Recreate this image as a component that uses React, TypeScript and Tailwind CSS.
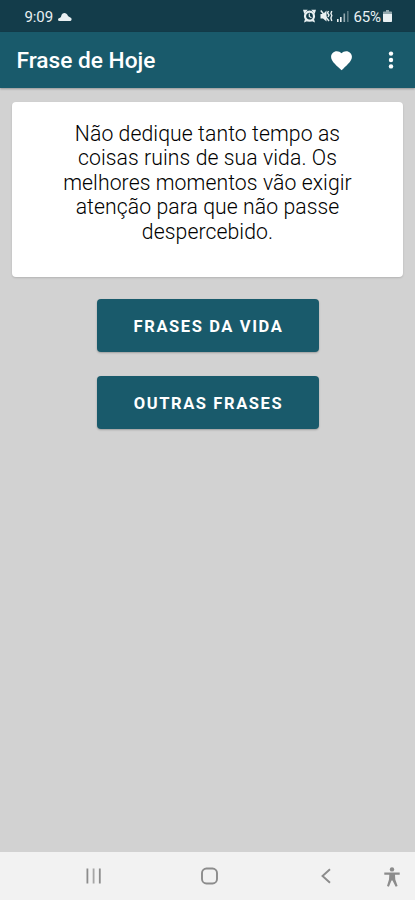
import React from "react";

const StatusBar = () => {
  return (
    <div className="flex h-8 items-center justify-between bg-[#133c4a] pr-[23px] pl-[24.500px] text-[#e9f0f2]">
      <div className="flex items-center gap-[5px]">
        <span className="text-[15px] leading-8 tracking-[-0.1px] pt-px">9:09</span>
        <svg width="14" height="9" viewBox="0 0 14 9" fill="currentColor">
          <path d="M1.500 9a1.500 1.500 0 0 1 0-3C3 5.800 3 4.500 3.600 2.800A3.200 3.200 0 0 1 9.200 2.600C10 4 10.300 4.600 12.300 5.600A1.800 1.800 0 0 1 12.500 9z" />
        </svg>
      </div>

      <div className="flex items-center">
        {/* Alarm */}
        <svg width="13" height="14" viewBox="0 0 13 14" fill="currentColor">
          <path d="M0 0.800h4.800L1.300 5zM13 0.800H8.200L11.700 5zM1 13.500l1-3.500 2.500 2zM12 13.500l-1-3.500-2.500 2z" />
          <circle cx="6.500" cy="7.200" r="4.500" fill="none" stroke="currentColor" strokeWidth="2.200" />
          <path d="M6.300 4.500v3l2.200 1.200" fill="none" stroke="currentColor" strokeWidth="1.200" />
        </svg>
        {/* Vibrate / muted */}
        <svg className="ml-[4px]" width="13" height="14" viewBox="0 0 13 14" fill="none" stroke="currentColor">
          <path d="M0.500 5h2.500l3.500-3.500v11L3 9.500H.5z" fill="currentColor" stroke="none" />
          <path d="M0.800 1.500L9 12" strokeWidth="1.400" />
          <path d="M8.500 2l-1 2 1.500 2-1 2M11.800 2l-.9 2.500.9 2-.9 2.500.9 3" strokeWidth="1.400" />
        </svg>
        {/* Signal */}
        <svg className="ml-[3px]" width="13" height="12" viewBox="0 0 13 12" fill="currentColor">
          <rect x="1" y="9" width="1.600" height="3" />
          <rect x="4" y="7" width="1.600" height="5" />
          <rect x="7.500" y="3.500" width="1.600" height="8.500" opacity=".6" />
          <rect x="11" y="1" width="1.600" height="11" opacity=".35" />
        </svg>
        <span className="ml-[4px] pt-px text-[15px] leading-8 tracking-[-0.100px]">65%</span>
        <svg className="ml-[2px]" width="9" height="12" viewBox="0 0 9 12" fill="currentColor">
          <path d="M3 0h3v1.500h2.200a.8.800 0 0 1 .8.800V4H0V2.300a.8.800 0 0 1 .8-.8H3z" opacity=".6" />
          <path d="M0 4h9v7.200a.8.800 0 0 1-.8.800H.8a.8.800 0 0 1-.8-.8z" />
        </svg>
      </div>
    </div>
  );
};

const AppBar = () => {
  return (
    <header className="relative flex h-14 items-center bg-[#195a6b] pr-[21px] pl-[16.500px] text-white shadow-[0_1px_2px_rgba(0,0,0,0.3)]">
      <h1 className="grow pt-[3px] text-[22.700px] font-medium">Frase de Hoje</h1>
      <button type="button" aria-label="Favoritos" className="pt-px">
        <svg width="25" height="25" viewBox="0 0 24 24" fill="currentColor">
          <path d="M12 21.350l-1.450-1.320C5.400 15.360 2 12.280 2 8.500 2 5.420 4.420 3 7.500 3c1.740 0 3.410.81 4.500 2.090C13.090 3.810 14.760 3 16.500 3 19.580 3 22 5.420 22 8.500c0 3.780-3.400 6.860-8.550 11.540L12 21.350z" />
        </svg>
      </button>
      <button type="button" aria-label="Mais" className="ml-[34px]">
        <svg width="6" height="18" viewBox="0 0 6 18" fill="currentColor">
          <circle cx="3" cy="2.600" r="2.200" />
          <circle cx="3" cy="9" r="2.200" />
          <circle cx="3" cy="15.400" r="2.200" />
        </svg>
      </button>
    </header>
  );
};

const PhraseButton = ({ label }: { label: string }) => {
  return (
    <button
      type="button"
      className="h-[53px] w-[222px] rounded-[4px] bg-[#195a6b] pt-[4px] pl-[2px] text-[16.500px] font-bold tracking-[1.600px] text-white shadow-[0_1px_2px_rgba(0,0,0,0.25)]"
    >
      {label}
    </button>
  );
};

const NavBar = () => {
  return (
    <nav className="flex h-[48px] items-center bg-[#f2f2f2] pl-[86px] text-[#8c8c8c]">
      {/* Recents */}
      <svg width="16" height="16" viewBox="0 0 16 16" fill="currentColor">
        <rect x="0.500" y="0.500" width="1.800" height="15" />
        <rect x="6.700" y="0.500" width="1.800" height="15" opacity=".75" />
        <rect x="12.900" y="0.500" width="1.800" height="15" />
      </svg>
      {/* Home */}
      <svg className="ml-[98px]" width="19" height="18" viewBox="0 0 19 18" fill="none" stroke="currentColor" strokeWidth="1.900">
        <rect x="2" y="1.500" width="15" height="15" rx="4.500" />
      </svg>
      {/* Back */}
      <svg className="ml-[101px]" width="12" height="16" viewBox="0 0 12 16" fill="none" stroke="currentColor" strokeWidth="1.900">
        <path d="M10 1.300L2.500 8l7.500 6.700" />
      </svg>
      {/* Accessibility */}
      <svg className="mt-px ml-[52px]" width="16" height="20" viewBox="0 0 16 20" fill="currentColor">
        <circle cx="8" cy="2.400" r="2.200" />
        <path d="M0.300 5.600h15.400v2.200H11l.3 4.800 2.300 6.400-1.900.7L8.500 13.500h-1L4.900 19.700 3 19l2-6.400.3-4.800H.3z" />
      </svg>
    </nav>
  );
};

export default function App() {
  return (
    <div className="flex h-[900px] w-[415px] flex-col bg-[#d2d2d2] font-['Roboto',sans-serif]">
      <StatusBar />
      <AppBar />

      <main className="flex grow flex-col items-center px-3 pt-[14px]">
        {/* Phrase of the day */}
        <div className="h-[175px] w-full rounded-[4px] bg-white px-10 pt-[19.500px] shadow-[0_1px_2px_rgba(0,0,0,0.15)]">
          <p className="text-center text-[21.200px] leading-[24.600px] font-[350] tracking-[0.080px] whitespace-nowrap text-black">
            Não dedique tanto tempo as
            <br />
            coisas ruins de sua vida. Os
            <br />
            melhores momentos vão exigir
            <br />
            atenção para que não passe
            <br />
            despercebido.
          </p>
        </div>

        <div className="mt-[22px] flex flex-col gap-6">
          <PhraseButton label="FRASES DA VIDA" />
          <PhraseButton label="OUTRAS FRASES" />
        </div>
      </main>

      <NavBar />
    </div>
  );
}
